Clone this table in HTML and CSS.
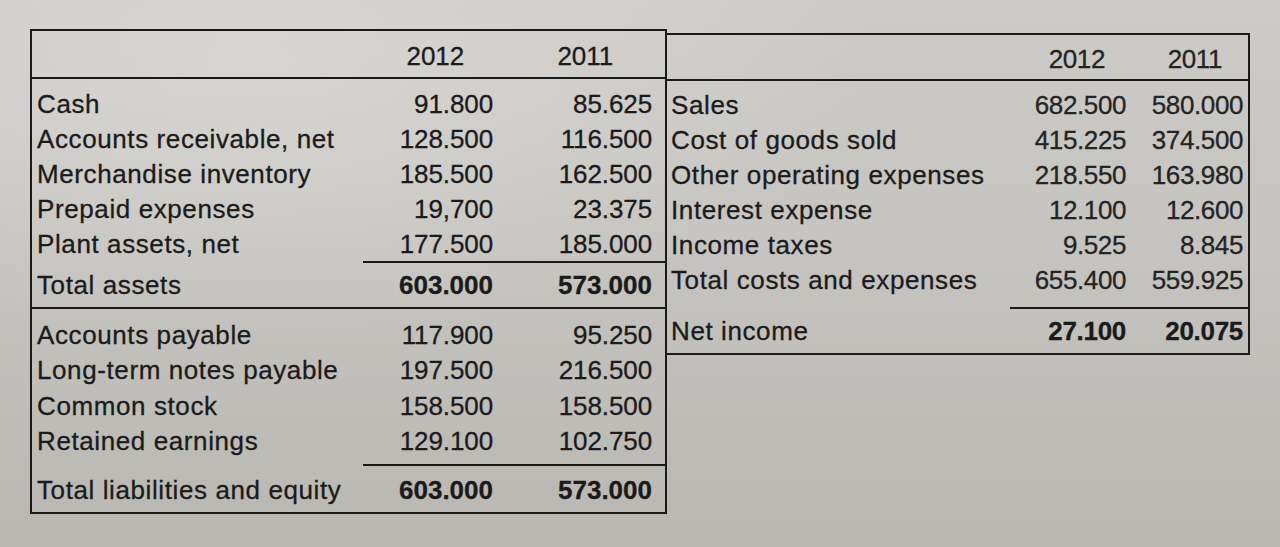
FILE: index.html
```html
<!DOCTYPE html>
<html lang="en">
<head>
<meta charset="utf-8">
<title>Financial statements 2012 / 2011</title>
<link rel="stylesheet" href="styles.css">
</head>
<body>
<div class="page">
  <div class="sheet">
    <section class="tbl balance">
      <div class="row head">
        <div class="lbl"></div>
        <div class="num">2012</div>
        <div class="num">2011</div>
      </div>
      <div class="group g1">
        <div class="row"><div class="lbl">Cash</div><div class="num">91.800</div><div class="num">85.625</div></div>
        <div class="row"><div class="lbl">Accounts receivable, net</div><div class="num">128.500</div><div class="num">116.500</div></div>
        <div class="row"><div class="lbl">Merchandise inventory</div><div class="num">185.500</div><div class="num">162.500</div></div>
        <div class="row"><div class="lbl">Prepaid expenses</div><div class="num">19,700</div><div class="num">23.375</div></div>
        <div class="row sub"><div class="lbl">Plant assets, net</div><div class="num">177.500</div><div class="num">185.000</div></div>
        <div class="row total"><div class="lbl">Total assets</div><div class="num">603.000</div><div class="num">573.000</div></div>
      </div>
      <div class="group g2">
        <div class="row"><div class="lbl">Accounts payable</div><div class="num">117.900</div><div class="num">95.250</div></div>
        <div class="row"><div class="lbl">Long-term notes payable</div><div class="num">197.500</div><div class="num">216.500</div></div>
        <div class="row"><div class="lbl">Common stock</div><div class="num">158.500</div><div class="num">158.500</div></div>
        <div class="row sub sub2"><div class="lbl">Retained earnings</div><div class="num">129.100</div><div class="num">102.750</div></div>
        <div class="row total total2"><div class="lbl">Total liabilities and equity</div><div class="num">603.000</div><div class="num">573.000</div></div>
      </div>
    </section>
    <section class="tbl income">
      <div class="row head">
        <div class="lbl"></div>
        <div class="num">2012</div>
        <div class="num">2011</div>
      </div>
      <div class="group g3">
        <div class="row"><div class="lbl">Sales</div><div class="num">682.500</div><div class="num">580.000</div></div>
        <div class="row"><div class="lbl">Cost of goods sold</div><div class="num">415.225</div><div class="num">374.500</div></div>
        <div class="row"><div class="lbl">Other operating expenses</div><div class="num">218.550</div><div class="num">163.980</div></div>
        <div class="row"><div class="lbl">Interest expense</div><div class="num">12.100</div><div class="num">12.600</div></div>
        <div class="row"><div class="lbl">Income taxes</div><div class="num">9.525</div><div class="num">8.845</div></div>
        <div class="row sub sub3"><div class="lbl">Total costs and expenses</div><div class="num">655.400</div><div class="num">559.925</div></div>
        <div class="row total total3"><div class="lbl">Net income</div><div class="num">27.100</div><div class="num">20.075</div></div>
      </div>
    </section>
  </div>
</div>
</body>
</html>
```

FILE: styles.css
```css
* { box-sizing: border-box; }

html, body {
  margin: 0;
  padding: 0;
  height: 100%;
}

body {
  width: 1280px;
  height: 547px;
  overflow: hidden;
  background:
    radial-gradient(ellipse 900px 400px at 250px 60px, rgba(224, 222, 218, 0.6), rgba(224, 222, 218, 0) 70%),
    linear-gradient(180deg, #cdcbc7 0%, #c6c4c0 45%, #b9b7b2 100%);
  font-family: "Liberation Sans", Arial, sans-serif;
  color: #1b1b1b;
  -webkit-text-stroke: 0.3px currentColor;
}

.page {
  padding: 29px 0 0 30px;
}

.sheet {
  display: flex;
  align-items: flex-start;
}

.tbl {
  border: 2px solid #1a1a1a;
}

.balance {
  width: 637px;
  height: 485px;
}

.income {
  width: 583px;
  margin-top: 4px;
  border-left: none;
}

.row {
  display: grid;
  height: 35px;
  align-items: center;
  font-size: 26px;
  line-height: 26px;
}

.balance .row { grid-template-columns: 1fr 140px 162px; }
.income .row { grid-template-columns: 1fr 120px 118px; }

.lbl {
  padding-left: 5px;
  letter-spacing: 0.6px;
  white-space: nowrap;
}

.num {
  text-align: right;
  white-space: nowrap;
  letter-spacing: -0.1px;
}

.balance .num { padding-right: 10px; }
.balance .num:last-child { padding-right: 13px; }
.income .lbl { padding-left: 4px; }
.income .num { padding-right: 4px; color: #242424; letter-spacing: -0.4px; }
.income .num:last-child { padding-right: 5px; }

/* header */
.row.head {
  height: 48px;
  border-bottom: 2px solid #1a1a1a;
  padding-top: 4px;
}
.balance .row.head .num { padding-right: 39px; }
.balance .row.head .num:last-child { padding-right: 52px; }
.income .row.head { height: 46px; padding-top: 3px; }
.income .row.head .num { padding-right: 25px; }
.income .row.head .num:last-child { padding-right: 26px; }

/* groups */
.g1 {
  padding-top: 7px;
  border-bottom: 2px solid #1a1a1a;
}
.g2 { padding-top: 8px; }
.g2 .row { height: 35.5px; }
.g3 { padding-top: 6px; }

/* subtotal underline over the number columns */
.row.sub {
  align-items: stretch;
}
.row.sub > div {
  display: flex;
  align-items: center;
  border-bottom: 2px solid transparent;
}
.row.sub > .num {
  justify-content: flex-end;
  border-bottom-color: #1a1a1a;
}
.row.sub { height: 37px; }
.row.sub2 { height: 42px; }
.row.sub2 > div { padding-bottom: 5px; }
.row.sub3 { height: 47px; }
.row.sub3 > div { padding-bottom: 10px; }

.row.total { height: 44px; }
.row.total .num { font-weight: bold; letter-spacing: 0; }
.row.total2 { height: 46px; padding-top: 2px; }
.row.total3 { height: 44px; }
.income .row.total3 .num { color: #1b1b1b; letter-spacing: -0.3px; }
```
